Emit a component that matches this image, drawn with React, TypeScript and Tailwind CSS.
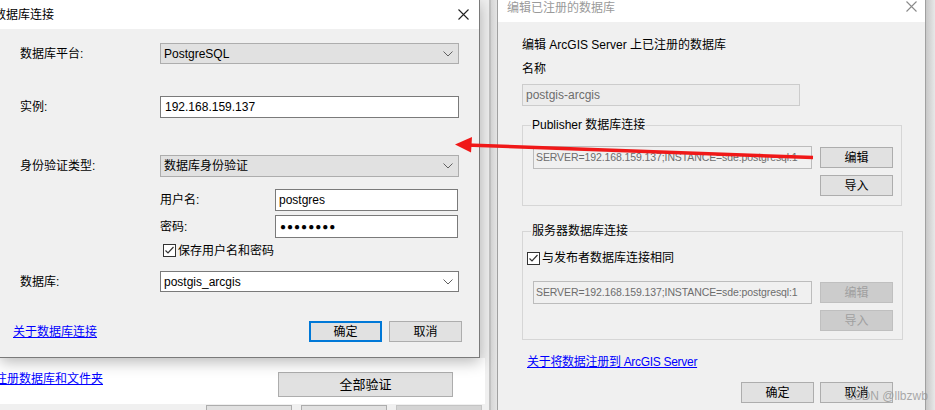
import React from 'react';

const Chevron = () => (
  <svg width="10" height="6" viewBox="0 0 10 6" className="shrink-0">
    <path d="M0.5 0.5 L5 5 L9.5 0.5" fill="none" stroke="#606060" strokeWidth="1" />
  </svg>
);

const CloseX = ({ color }: { color: string }) => (
  <svg width="11" height="11" viewBox="0 0 11 11">
    <path d="M0.5 0.5 L10.5 10.5 M10.5 0.5 L0.5 10.5" stroke={color} strokeWidth="1.1" />
  </svg>
);

const CheckBox = () => (
  <svg width="13" height="13" viewBox="0 0 13 13" className="shrink-0">
    <rect x="0.5" y="0.5" width="12" height="12" fill="#fff" stroke="#333" />
    <path d="M2.5 6.5 L5 9 L10.5 3" fill="none" stroke="#333" strokeWidth="1.2" />
  </svg>
);

const Btn = ({ label, focus, disabled, w = 'w-[73px]' }: { label: string; focus?: boolean; disabled?: boolean; w?: string }) => (
  <div
    className={`${w} h-[21px] flex items-center justify-center text-[12px] leading-none ${
      focus
        ? 'border-2 border-[#0078d7] bg-[#e1e1e1] text-black'
        : disabled
        ? 'border border-[#bfbfbf] bg-[#cccccc] text-[#a0a0a0]'
        : 'border border-[#adadad] bg-[#e1e1e1] text-black'
    }`}
  >
    {label}
  </div>
);

const SelectBox = ({ value, white, h = 'h-[21px]' }: { value: string; white?: boolean; h?: string }) => (
  <div
    className={`w-[299px] ${h} flex items-center justify-between pl-[3px] pr-[5px] border ${
      white ? 'bg-white border-[#7a7a7a]' : 'bg-[#e1e1e1] border-[#adadad]'
    }`}
  >
    <span className="text-[12px] leading-none text-black">{value}</span>
    <Chevron />
  </div>
);

const ConnectionDialog = () => (
  <div className="relative z-10 w-[480px] h-[358px] flex flex-col border-r border-b border-[#7a7a7a] shadow-[0_4px_14px_rgba(0,0,0,0.28)]">
    {/* title bar */}
    <div className="h-[29px] bg-white flex items-center justify-between pr-[10px] shrink-0">
      <span className="ml-[-6px] text-[12px] leading-none text-black">数据库连接</span>
      <CloseX color="#222" />
    </div>

    {/* body */}
    <div className="flex-1 bg-[#f0f0f0] pl-[20px] pr-[20px] flex flex-col">
      <div className="mt-[14px] flex items-center">
        <span className="w-[140px] text-[12px] leading-none">数据库平台:</span>
        <SelectBox value="PostgreSQL" />
      </div>

      <div className="mt-[32px] flex items-center">
        <span className="w-[140px] text-[12px] leading-none">实例:</span>
        <div className="w-[299px] h-[22px] bg-white border border-[#7a7a7a] flex items-center pl-[4px] text-[12px] leading-none">
          192.168.159.137
        </div>
      </div>

      <div className="mt-[37px] flex items-center">
        <span className="w-[140px] text-[12px] leading-none">身份验证类型:</span>
        <SelectBox value="数据库身份验证" h="h-[22px]" />
      </div>

      <div className="mt-[12px] ml-[140px] flex items-center">
        <span className="w-[115px] text-[12px] leading-none">用户名:</span>
        <div className="w-[183px] h-[22px] bg-white border border-[#7a7a7a] flex items-center pl-[3px] text-[12px] leading-none">
          postgres
        </div>
      </div>

      <div className="mt-[4px] ml-[140px] flex items-center">
        <span className="w-[115px] text-[12px] leading-none">密码:</span>
        <div className="w-[183px] h-[23px] bg-white border border-[#7a7a7a] flex items-center pl-[4px] text-[10px] leading-none tracking-[1px]">
          ●●●●●●●●
        </div>
      </div>

      <div className="mt-[6px] ml-[143px] flex items-center gap-[2px]">
        <CheckBox />
        <span className="text-[12px] leading-none">保存用户名和密码</span>
      </div>

      <div className="mt-[14px] flex items-center">
        <span className="w-[140px] text-[12px] leading-none">数据库:</span>
        <SelectBox value="postgis_arcgis" white />
      </div>

      <div className="mt-[29px] ml-[-7px] mr-[-3px] flex items-center justify-between">
        <span className="text-[12px] leading-none text-[#0000ff] underline">关于数据库连接</span>
        <div className="flex gap-[7px]">
          <Btn label="确定" focus />
          <Btn label="取消" />
        </div>
      </div>
    </div>
  </div>
);

const ServerField = () => (
  <div className="w-[279px] h-[23px] bg-[#f0f0f0] border border-[#bcbcbc] flex items-center pl-[2px] overflow-hidden whitespace-nowrap text-[10.5px] tracking-[-0.1px] leading-none text-[#6d6d6d]">
    SERVER=192.168.159.137;INSTANCE=sde:postgresql:1
  </div>
);

const EditDialog = () => (
  <div className="w-[429px] h-full flex flex-col border-l border-r border-[#a0a0a0]">
    <div className="h-[22px] bg-white flex items-start justify-between pl-[9px] pr-[8px] shrink-0">
      <span className="mt-[1px] text-[12px] leading-[14px] text-[#9a9a9a]">编辑已注册的数据库</span>
      <div className="mt-[1px]">
        <CloseX color="#8a8a8a" />
      </div>
    </div>

    <div className="flex-1 bg-[#f0f0f0] pl-[24px] flex flex-col">
      <span className="mt-[15px] text-[12px] leading-[16px]">编辑 ArcGIS Server 上已注册的数据库</span>
      <span className="mt-[8px] text-[12px] leading-[16px]">名称</span>
      <div className="mt-[7px] w-[278px] h-[22px] bg-[#ececec] border border-[#cccccc] flex items-center pl-[3px] text-[12px] leading-none text-[#6d6d6d]">
        postgis-arcgis
      </div>

      <fieldset className="mt-[11px] w-[380px] border border-[#d6d6d6] pl-[10px] pb-[9px]">
        <legend className="ml-[-2px] px-[1px] text-[12px] leading-[16px]">Publisher 数据库连接</legend>
        <div className="mt-[13px] flex items-start gap-[8px]">
          <ServerField />
          <div className="mt-[1px] flex flex-col gap-[7px]">
            <Btn label="编辑" />
            <Btn label="导入" />
          </div>
        </div>
      </fieldset>

      <fieldset className="mt-[17px] w-[381px] border border-[#d6d6d6] pl-[10px] pb-[8px]">
        <legend className="ml-[-2px] px-[1px] text-[12px] leading-[16px]">服务器数据库连接</legend>
        <div className="mt-[12px] ml-[-6px] flex items-center gap-[2px]">
          <CheckBox />
          <span className="text-[12px] leading-[14px]">与发布者数据库连接相同</span>
        </div>
        <div className="mt-[16px] flex items-start gap-[8px]">
          <ServerField />
          <div className="mt-[1px] flex flex-col gap-[7px]">
            <Btn label="编辑" disabled />
            <Btn label="导入" disabled />
          </div>
        </div>
      </fieldset>

      <span className="mt-[14px] ml-[5px] self-start text-[12px] leading-[16px] tracking-[-0.3px] text-[#0000ff] underline">
        关于将数据注册到 ArcGIS Server
      </span>

      <div className="mt-[12px] w-[380px] pr-[9px] flex justify-end gap-[6px]">
        <Btn label="确定" />
        <Btn label="取消" />
      </div>
    </div>
  </div>
);

export default function App() {
  return (
    <div className="relative w-[935px] h-[410px] overflow-hidden flex bg-[#f0f0f0] text-black font-['Liberation_Sans','Noto_Sans_CJK_SC',sans-serif]">
      {/* left: connection dialog over the registration window */}
      <div className="w-[489px] h-full flex flex-col">
        <div className="flex h-[358px]">
          <ConnectionDialog />
          <div className="flex-1 bg-[#f0f0f0]" />
        </div>
        <div className="h-[46px] flex">
          <div className="w-[485px] bg-white flex items-start">
            <span className="mt-[13px] ml-[-5px] text-[12px] leading-[16px] text-[#0000ff] underline">注册数据库和文件夹</span>
            <div className="mt-[14px] ml-[175px] w-[175px] h-[25px] bg-[#e1e1e1] border border-[#adadad] flex items-center justify-center text-[13px] leading-none">
              全部验证
            </div>
          </div>
          <div className="flex-1 bg-[#f0f0f0]" />
        </div>
        <div className="flex-1 bg-[#f0f0f0] flex items-end pl-[206px] gap-[9px]">
          <div className="w-[86px] h-[5px] bg-[#e1e1e1] border-t border-x border-[#adadad]" />
          <div className="w-[86px] h-[5px] bg-[#e1e1e1] border-t border-x border-[#adadad]" />
          <div className="w-[86px] h-[5px] bg-[#d4d4d4] border-t border-x border-[#c4c4c4]" />
        </div>
      </div>

      {/* gap between windows */}
      <div className="w-[8px] h-full flex">
        <div className="w-[2px] bg-[#c2c2c2]" />
        <div className="flex-1 bg-gradient-to-r from-[#d6d6d6] to-[#e4e4e4]" />
      </div>

      <EditDialog />

      <div className="flex-1 h-full bg-gradient-to-r from-[#c8c8c8] to-[#e8e8e8]" />

      {/* red arrow annotation */}
      <svg className="absolute inset-0 z-20 pointer-events-none" width="935" height="410" viewBox="0 0 935 410">
        <line x1="466" y1="145" x2="813" y2="157.5" stroke="#f01818" strokeWidth="3.5" />
        <polygon points="455,144.5 472,137 471,152.5" fill="#f01818" />
      </svg>

      {/* watermark */}
      <span className="absolute z-20 left-[845px] top-[389px] text-[12px] leading-[14px] whitespace-nowrap text-[#8f8f8f]/75">CSDN @llbzwb</span>
    </div>
  );
}
